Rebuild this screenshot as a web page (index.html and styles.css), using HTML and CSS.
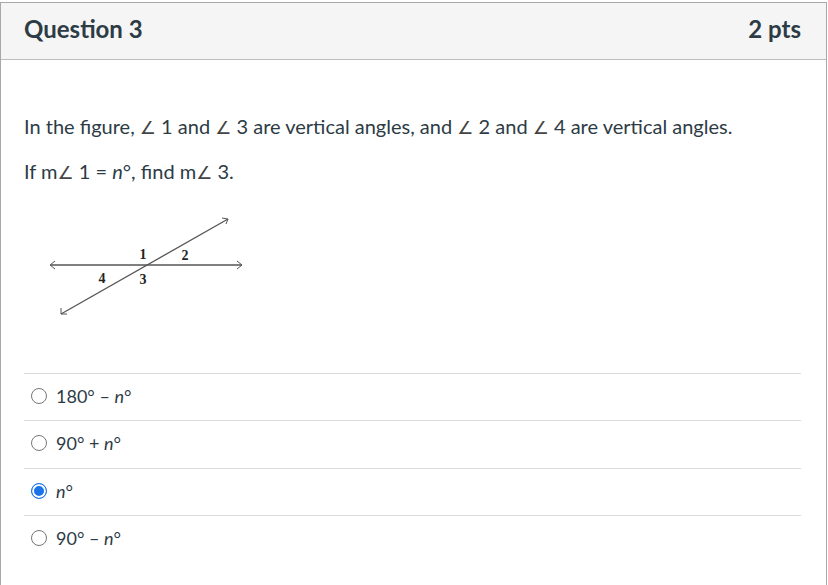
FILE: index.html
```html
<!DOCTYPE html>
<html>
<head>
<meta charset="utf-8">
<link rel="stylesheet" href="styles.css">
</head>
<body>
<div class="card">
  <div class="header">
    <span class="title">Question 3</span>
    <span class="pts">2 pts</span>
  </div>
  <div class="body">
    <p class="q q1">In the figure, <span class="ang">∠</span> 1 and <span class="ang">∠</span> 3 are vertical angles, and <span class="ang">∠</span> 2 and <span class="ang">∠</span> 4 are vertical angles.</p>
    <p class="q q2">If m<span class="ang">∠</span> 1 = <i>n</i>°, find m<span class="ang">∠</span> 3.</p>
    <svg class="fig" width="230" height="115" viewBox="0 0 230 115">
      <g stroke="#555" fill="none" stroke-width="1.3">
        <line x1="27" y1="58" x2="218" y2="58" stroke-width="1.6"/>
        <path d="M31 54 L26 58 L31 62" stroke-width="1"/>
        <path d="M213 54 L218 58 L213 62" stroke-width="1"/>
        <line x1="37" y1="107" x2="204" y2="12"/>
        <path d="M37 101 L37 107 L43 107" stroke-width="1"/>
        <path d="M198 11 L204 12 L202 17" stroke-width="1"/>
      </g>
      <g font-family="'Liberation Serif', serif" font-weight="bold" font-size="14" fill="#222" text-anchor="middle">
        <text x="119" y="52">1</text>
        <text x="161" y="53">2</text>
        <text x="78" y="76">4</text>
        <text x="119" y="77">3</text>
      </g>
    </svg>
    <div class="answers">
      <div class="ans"><span class="radio"></span><span class="lbl">180° – <i>n</i>°</span></div>
      <div class="ans"><span class="radio"></span><span class="lbl">90° + <i>n</i>°</span></div>
      <div class="ans"><span class="radio checked"></span><span class="lbl"><i>n</i>°</span></div>
      <div class="ans"><span class="radio"></span><span class="lbl">90° – <i>n</i>°</span></div>
    </div>
  </div>
</div>
</body>
</html>
```
FILE: styles.css
```css
html, body {
  margin: 0;
  padding: 0;
  background: #fff;
}
body {
  padding-top: 2px;
  font-family: Lato, "Liberation Sans", sans-serif;
  color: #2d3b45;
}
.card {
  width: 827px;
  height: 583px;
  border: 1px solid #a8a8a8;
  border-bottom: none;
  box-sizing: border-box;
}
.header {
  height: 57px;
  background: #f5f5f5;
  border-bottom: 1px solid #bdbdbd;
  display: flex;
  align-items: center;
  justify-content: space-between;
  padding: 0 25px 5px 23px;
  box-sizing: border-box;
}
.title, .pts {
  font-size: 24px;
  font-weight: bold;
  color: #2d3b45;
}
.body {
  padding: 0 25px 0 23px;
}
.q {
  margin: 0;
  font-size: 20px;
  line-height: 27px;
}
.q1 {
  margin-top: 53px;
}
.q2 {
  margin-top: 17px;
}
.ang {
  font-family: "DejaVu Sans", sans-serif;
  font-size: 18px;
  color: #444;
}
.fig {
  display: block;
  margin-top: 21px;
}
.answers {
  margin-top: 51px;
}
.ans {
  height: 47px;
  border-top: 1px solid #dcdcdc;
  display: flex;
  align-items: center;
  padding-bottom: 3px;
  box-sizing: border-box;
}
.ans:nth-child(2) { height: 48px; }
.radio {
  width: 16px;
  height: 16px;
  border-radius: 50%;
  border: 1px solid #777;
  box-sizing: border-box;
  margin-left: 7px;
  margin-right: 9px;
  background: #fff;
  flex: none;
}
.radio.checked {
  border: 1.5px solid #1a73e8;
  background: #1a73e8;
  box-shadow: inset 0 0 0 2px #fff;
}
.lbl {
  font-size: 18px;
  color: #2d3b45;
}
```
